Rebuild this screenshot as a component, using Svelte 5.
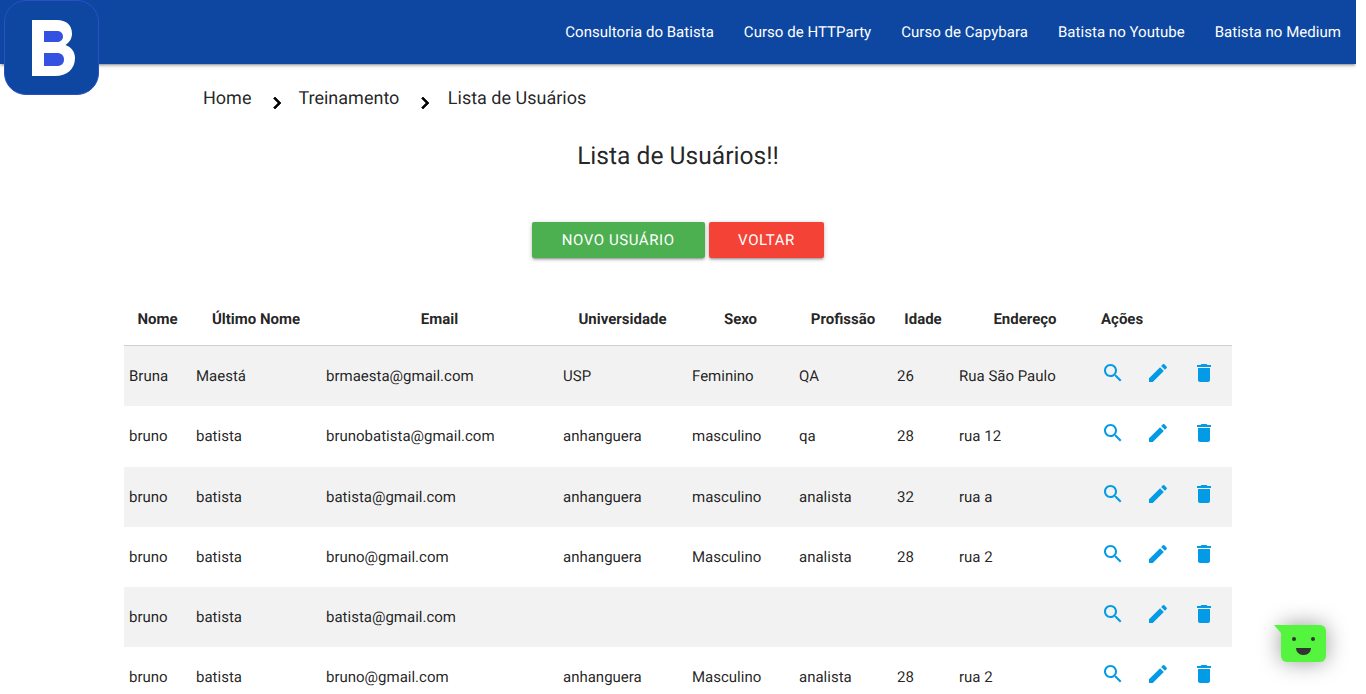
<script>
  const links = ['Consultoria do Batista', 'Curso de HTTParty', 'Curso de Capybara', 'Batista no Youtube', 'Batista no Medium'];
  const crumbs = ['Home', 'Treinamento', 'Lista de Usuários'];
  const heads = ['Nome', 'Último Nome', 'Email', 'Universidade', 'Sexo', 'Profissão', 'Idade', 'Endereço'];
  const rows = [
    ['Bruna', 'Maestá', 'brmaesta@gmail.com', 'USP', 'Feminino', 'QA', '26', 'Rua São Paulo'],
    ['bruno', 'batista', 'brunobatista@gmail.com', 'anhanguera', 'masculino', 'qa', '28', 'rua 12'],
    ['bruno', 'batista', 'batista@gmail.com', 'anhanguera', 'masculino', 'analista', '32', 'rua a'],
    ['bruno', 'batista', 'bruno@gmail.com', 'anhanguera', 'Masculino', 'analista', '28', 'rua 2'],
    ['bruno', 'batista', 'batista@gmail.com', '', '', '', '', ''],
    ['bruno', 'batista', 'bruno@gmail.com', 'anhanguera', 'Masculino', 'analista', '28', 'rua 2']
  ];
  const icons = [
    'M15.5 14h-.79l-.28-.27C15.41 12.59 16 11.11 16 9.5 16 5.91 13.09 3 9.5 3S3 5.91 3 9.5 5.91 16 9.5 16c1.61 0 3.09-.59 4.23-1.57l.27.28v.79l5 4.99L20.49 19l-4.99-5zm-6 0C7.01 14 5 11.99 5 9.5S7.01 5 9.5 5 14 7.01 14 9.5 11.99 14 9.5 14z',
    'M3 17.25V21h3.75L17.81 9.94l-3.75-3.75L3 17.25zM20.71 7.04c.39-.39.39-1.02 0-1.41l-2.34-2.34c-.39-.39-1.02-.39-1.41 0l-1.83 1.83 3.75 3.75 1.83-1.83z',
    'M6 19c0 1.1.9 2 2 2h8c1.1 0 2-.9 2-2V7H6v12zM19 4h-3.5l-1-1h-5l-1 1H5v2h14V4z'
  ];
  const widths = [67, 130, 237, 129, 107, 98, 62, 142, 45, 46, 45];
</script>

<div class="page">
  <nav>
    {#each links as link}
      <a href="#top">{link}</a>
    {/each}
  </nav>

  <div class="logo">
    <svg viewBox="0 0 43 56" width="43" height="56" aria-hidden="true">
      <path fill="#fff" d="M0 0H25C34 0 40 5 40 13.500C40 18.500 37.500 22.500 33.500 25C39.500 27 43 32 43 38C43 49 35 56 23 56H0Z"/>
      <path fill="#3452e1" d="M12 11H24.500C28.500 11 31 13 31 16.500C31 20 28.500 22 24.500 22H12ZM12 33H25C29.500 33 32 35.500 32 39.500C32 43.500 29.500 46 25 46H12Z"/>
    </svg>
  </div>

  <main>
    <div class="crumbs">
      {#each crumbs as crumb, i}
        {#if i > 0}
          <svg class="chev" class:last={i === 2} viewBox="0 0 24 24" width="24" height="24" aria-hidden="true">
            <path d="M10 6L8.590 7.410 13.170 12l-4.580 4.590L10 18l6-6z"/>
          </svg>
        {/if}
        <span>{crumb}</span>
      {/each}
    </div>

    <h1>Lista de Usuários!!</h1>

    <div class="actions">
      <button class="green">Novo Usuário</button>
      <button class="red">Voltar</button>
    </div>

    <table>
      <colgroup>
        {#each widths as w}
          <col style="width:{w}px" />
        {/each}
      </colgroup>
      <thead>
        <tr>
          {#each heads as h}
            <th>{h}</th>
          {/each}
          <th class="acoes" colspan="3">Ações</th>
        </tr>
      </thead>
      <tbody>
        {#each rows as row}
          <tr>
            {#each row as cell}
              <td>{cell}</td>
            {/each}
            {#each icons as d}
              <td class="ic">
                <svg viewBox="0 0 24 24" width="24" height="24" aria-hidden="true"><path {d} /></svg>
              </td>
            {/each}
          </tr>
        {/each}
      </tbody>
    </table>
  </main>

  <div class="chat">
    <span class="tail"></span>
    <span class="eye l"></span>
    <span class="eye r"></span>
    <span class="mouth"></span>
  </div>
</div>

<style>
  :global(html), :global(body) {
    margin: 0;
    height: 100%;
    overflow: hidden;
    background: #fff;
  }
  .page {
    position: relative;
    width: 1356px;
    height: 694px;
    overflow: hidden;
    font-family: Roboto, "Liberation Sans", sans-serif;
    color: rgba(0, 0, 0, 0.87);
    font-size: 15px;
    text-rendering: geometricPrecision;
  }
  nav {
    height: 64px;
    background: #0d47a1;
    display: flex;
    justify-content: flex-end;
    align-items: center;
    box-shadow: 0 2px 2px 0 rgba(0,0,0,.14), 0 3px 1px -2px rgba(0,0,0,.12), 0 1px 5px 0 rgba(0,0,0,.2);
  }
  nav a {
    color: #fff;
    text-decoration: none;
    padding: 0 15px;
    font-size: 15px;
    letter-spacing: .035px;
    line-height: 64px;
  }
  .logo {
    position: absolute;
    left: 4px;
    top: 0;
    width: 95px;
    height: 95px;
    box-sizing: border-box;
    border: 1px solid #2a50c4;
    border-radius: 22px;
    background: #0d47a1;
    display: flex;
    align-items: center;
    justify-content: center;
    padding-left: 4px;
  }
  main {
    width: 1108px;
    margin: 0 auto;
  }
  .crumbs {
    display: flex;
    align-items: flex-start;
    padding: 23px 0 0 79px;
    font-size: 18px;
    line-height: 24px;
    height: 37px;
  }
  .chev {
    margin: 4px 9.500px 0 13.500px;
    fill: #000;
    stroke: #000;
    stroke-width: .7;
    flex: none;
  }
  .chev.last {
    margin-right: 11px;
  }
  h1 {
    margin: 0;
    padding-top: 15px;
    height: 83px;
    box-sizing: content-box;
    font-size: 24.6px;
    line-height: 36px;
    font-weight: 400;
    text-align: center;
  }
  .actions {
    display: flex;
    justify-content: center;
    gap: 4px;
  }
  button {
    height: 36px;
    padding: 0 30px;
    border: 0;
    border-radius: 2px;
    color: #fff;
    font: 400 15px Roboto, sans-serif;
    letter-spacing: .58px;
    text-transform: uppercase;
    text-rendering: geometricPrecision;
    box-shadow: 0 2px 2px 0 rgba(0,0,0,.14), 0 3px 1px -2px rgba(0,0,0,.12), 0 1px 5px 0 rgba(0,0,0,.2);
  }
  .green { background: #4caf50; }
  .red { background: #f44336; padding: 0 29.500px; }
  table {
    margin-top: 34px;
    width: 1108px;
    table-layout: fixed;
    border-collapse: separate;
    border-spacing: 0;
  }
  th {
    height: 54px;
    padding: 1px 5px 0;
    font-size: 15px;
    font-weight: 700;
    text-align: center;
    border-bottom: 1px solid #d0d0d0;
    box-sizing: border-box;
  }
  th.acoes { text-align: left; }
  td {
    height: 60.250px;
    padding: 0 5px;
    box-sizing: border-box;
    vertical-align: middle;
    white-space: nowrap;
  }
  tbody tr:nth-child(odd) { background: #f2f2f2; }
  td.ic { padding: 0 0 6px 5px; }
  td.ic svg {
    display: block;
    fill: #039be5;
  }
  .chat {
    position: absolute;
    left: 1281px;
    top: 625px;
    width: 45px;
    height: 37px;
    background: #55f53f;
    border-radius: 0 6px 6px 6px;
    box-shadow: 0 0 22px rgba(0,0,0,.4);
  }
  .tail {
    position: absolute;
    left: -7px;
    top: 0;
    width: 0;
    height: 0;
    border-top: 8px solid #55f53f;
    border-left: 7px solid transparent;
  }
  .eye {
    position: absolute;
    top: 12px;
    width: 4px;
    height: 4px;
    background: #333;
    border-radius: 50%;
  }
  .eye.l { left: 11px; }
  .eye.r { left: 30px; }
  .mouth {
    position: absolute;
    left: 15px;
    top: 23px;
    width: 15px;
    height: 7px;
    background: #333;
    border-radius: 0 0 8px 8px;
  }
</style>
